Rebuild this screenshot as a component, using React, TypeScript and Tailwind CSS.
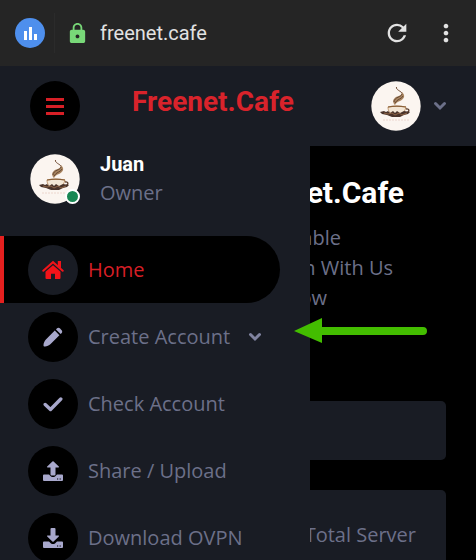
import type { ReactNode } from "react";
import { MdLock, MdMoreVert, MdRefresh } from "react-icons/md";

function Logo() {
  return (
    <svg viewBox="0 0 50 50" className="block size-[50px]" role="img" aria-label="Coffee cup logo">
      <circle cx="25" cy="25" r="24.7" fill="#fbf5f0" />
      <path d="M25.5 6c-1 3 5 4 6 7" fill="none" stroke="#76533b" strokeWidth="1" />
      <path d="M31 11c4 4 2 7-2 9-3 1-4 2-5 4-3-3-2-6 1-8 3-1 6-2 6-5Z" fill="#a98560" />
      <path d="M31 13c0 3-8 3-8 8M32 15c-1 3-6 3-8 7" fill="none" stroke="#5e4230" strokeWidth=".9" />
      <path d="M17 26c6-1 12-1 18 0-1 4-3 7-6 9h-6c-4-2-6-5-6-9Z" fill="#f3e6d5" stroke="#b28354" strokeWidth=".8" />
      <path d="M17 26c5-1 12-1 18 0" fill="none" stroke="#8a6038" strokeWidth="1.2" />
      <path d="M35 28c4-1 4 4-1 4" fill="none" stroke="#563827" strokeWidth="1.3" />
      <path d="M9 31l4-1 2 1 2-1 2 2 3-2 2 2 2-2 3 2 4-2 6 1-2 2-4 1-4 2h-8l-5-2-5-1Z" fill="#49332a" />
      <path d="M13 32l4 1 4-1 3 2 4-2 3 2 5-2" fill="none" stroke="#ac7850" strokeWidth=".7" />
      <path d="M12 39h26" stroke="#ecd6cd" strokeWidth="1" strokeDasharray="2 1" />
    </svg>
  );
}

function Chevron() {
  return (
    <svg viewBox="0 0 14 10" className="h-[10px] w-[14px]" fill="none" stroke="currentColor" strokeWidth="3" aria-hidden="true">
      <path d="m2.5 2.5 4.5 4.5 4.5-4.5" strokeLinecap="round" />
    </svg>
  );
}

function Home() {
  return (
    <svg viewBox="0 0 22 20" className="h-5 w-[22px]" fill="currentColor" aria-hidden="true">
      <path d="M1.3 10.8 11 2.2l9.7 8.6" fill="none" stroke="currentColor" strokeWidth="2" strokeLinecap="round" />
      <path d="M15.8 1h3.2v7.5l-3.2-2.8Z" />
      <path d="m11 5.2 7.5 6.6V18q0 1-1 1H13v-5.2H9V19H4.500q-1 0-1-1v-6.200Z" />
    </svg>
  );
}

function Pencil() {
  return (
    <svg viewBox="0 0 20 20" className="size-5" fill="currentColor" aria-hidden="true">
      <path d="m11.800 3.600 4.600 4.600-8.800 8.900c-1.500 1.400-3.800 2.300-5.500 2.400-1.100.1-1.700-.5-1.600-1.600.1-1.800.9-4 2.400-5.500Z" />
      <path d="m13 2.400.8-.8c1-1 2.200-1 3.300 0l1.300 1.300c1.100 1.100 1.100 2.300.1 3.300l-.9.8Z" />
    </svg>
  );
}

function Check() {
  return (
    <svg viewBox="0 0 20 20" className="size-5" fill="none" stroke="currentColor" strokeWidth="3.4" aria-hidden="true">
      <path d="m2.200 10.500 5.300 5L17.800 5" strokeLinecap="round" strokeLinejoin="round" />
    </svg>
  );
}

function Tray({ up = false }: { up?: boolean }) {
  return (
    <svg viewBox="0 0 20 20" className="size-5" fill="currentColor" aria-hidden="true">
      {up ? (
        <path d="m9.400.5q.6-.6 1.200 0l5.200 4.900q.8 1-.5 1H12.500v7q0 1-1 1h-3q-1 0-1-1v-7H4.700q-1.300 0-.5-1Z" />
      ) : (
        <path d="M8.500 0h3q1 0 1 1v6.500h2.800q1.300 0 .5 1l-5.200 5q-.6.6-1.200 0l-5.200-5q-.8-1 .5-1H7.500V1q0-1 1-1Z" />
      )}
      <path fillRule="evenodd" d="M1 13.500h5l2 2q2 1.200 4 0l2-2h5q1 0 1 1V19q0 1-1 1H1q-1 0-1-1v-4.500q0-1 1-1Zm13 3.900v1.200h1.200v-1.200Zm2.600 0v1.200h1.200v-1.200Z" />
    </svg>
  );
}

type ItemProps = { icon: ReactNode; label: string; active?: boolean; expandable?: boolean };

function Item({ icon, label, active, expandable }: ItemProps) {
  return (
    <li>
      <a
        href="#"
        className={
          active
            ? "mr-[30px] flex h-[67px] items-center gap-[10px] rounded-r-[34px] border-l-4 border-[#e5201f] bg-black pl-6 text-[#d71f26]"
            : "mr-[30px] flex h-[67px] items-center gap-[10px] border-l-4 border-transparent pl-6 text-[#6c7089]"
        }
      >
        <span
          className={
            active
              ? "flex size-[50px] shrink-0 items-center justify-center rounded-full bg-[#191c24] text-[#f31319]"
              : "flex size-[50px] shrink-0 items-center justify-center rounded-full bg-black text-[#a8a8cc]"
          }
        >
          {icon}
        </span>
        <span className="whitespace-nowrap">{label}</span>
        {expandable && <span className="ml-2 text-[#8083a0]"><Chevron /></span>}
      </a>
    </li>
  );
}

export default function App() {
  return (
    <div className="flex h-screen flex-col overflow-hidden bg-black font-['Open_Sans','Noto_Sans',sans-serif] text-[20px] leading-[30px] text-[#6c7089]">
      <div className="flex h-[66px] shrink-0 items-center bg-[#252525] pl-[15px] pr-4 font-['Roboto',sans-serif] text-[#e2e2e2]">
        <span className="flex size-[30px] items-center justify-center rounded-full bg-[#4e8fed]">
          <svg viewBox="0 0 14 14" className="size-[14px]" fill="white" aria-hidden="true">
            <path d="M1 5h3v9H1zM6 1h3v13H6zM11 8h3v6h-3z" />
          </svg>
        </span>
        <span className="ml-[9px] h-10 w-px bg-[#2b2b2b]" />
        <MdLock className="ml-[11px] size-[23px] text-[#78d878]" />
        <span className="ml-[11px] grow">freenet.cafe</span>
        <button type="button" aria-label="Reload"><MdRefresh className="size-7" /></button>
        <button type="button" aria-label="Menu" className="ml-[21px]"><MdMoreVert className="size-7" /></button>
      </div>

      <header className="flex h-20 shrink-0 items-center bg-[#191c24] pl-[30px] pr-[29px]">
        <button type="button" aria-label="Toggle sidebar" className="flex size-[50px] items-center justify-center rounded-full bg-black text-[#d71f26]">
          <svg viewBox="0 0 18 17" className="h-[17px] w-[18px]" fill="currentColor" aria-hidden="true">
            <path d="M0 0h18v3H0zM0 7h18v3H0zM0 14h18v3H0z" />
          </svg>
        </button>
        <h1 className="ml-[52px] grow pb-2 font-['Roboto',sans-serif] text-[28px] font-bold text-[#d9232b]">Freenet.Cafe</h1>
        <button type="button" aria-label="Account" className="flex items-center gap-3 text-[#6c7089]">
          <Logo />
          <Chevron />
        </button>
      </header>

      <div className="relative min-h-0 grow">
        <main className="px-[30px] pt-8 text-right">
          <h2 className="pr-[42px] font-['Roboto',sans-serif] text-[30px] font-bold text-white">Freenet.Cafe</h2>
          <div className="mt-[15px]">
            <p className="pr-[105px]">Stable</p>
            <p className="pr-[53px]">Join With Us</p>
            <p className="pr-[119px]">Now</p>
          </div>
          <section className="mt-[88px] h-[59px] rounded-[5px] bg-[#191c24]" />
          <section className="mt-[30px] rounded-[5px] bg-[#191c24] p-[30px]">Total Server</section>
        </main>

        <aside className="absolute inset-y-0 left-0 w-[310px] overflow-hidden bg-[#191c24]">
          <div className="flex h-[90px] gap-5 pl-[30px] pt-2">
            <div className="relative size-[50px]">
              <Logo />
              <span className="absolute bottom-0 right-0 size-[15px] rounded-full border-2 border-white bg-[#198754]" />
            </div>
            <div className="-mt-1">
              <h3 className="font-['Roboto',sans-serif] leading-7 font-bold text-white">Juan</h3>
              <p>Owner</p>
            </div>
          </div>
          <nav>
            <ul>
              <Item active label="Home" icon={<Home />} />
              <Item label="Create Account" expandable icon={<Pencil />} />
              <Item label="Check Account" icon={<Check />} />
              <Item label="Share / Upload" icon={<Tray up />} />
              <Item label="Download OVPN" icon={<Tray />} />
            </ul>
          </nav>
        </aside>

        <svg viewBox="0 0 133 26" className="absolute left-[294px] top-[172px] h-[26px] w-[133px]" aria-hidden="true">
          <path d="M0 13 28 0v9h101q4 0 4 4t-4 4H28v8Z" fill="#43bd00" />
        </svg>
      </div>
    </div>
  );
}
